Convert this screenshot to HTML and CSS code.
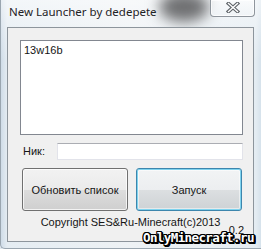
FILE: index.html
```html
<!DOCTYPE html>
<html>
<head>
<meta charset="utf-8">
<link rel="stylesheet" href="styles.css">
</head>
<body>
<div class="window">
  <div class="blob"></div>
  <div class="titlebar">
    <div class="title">New Launcher by dedepete</div>
    <div class="close">
      <svg width="14" height="11" viewBox="0 0 14 11">
        <path d="M2.5 1.5 L11.5 9.5 M11.5 1.5 L2.5 9.5" stroke="#5f6469" stroke-width="3.6" stroke-linecap="square" fill="none"/>
        <path d="M2.5 1.5 L11.5 9.5 M11.5 1.5 L2.5 9.5" stroke="#ffffff" stroke-width="1.4" stroke-linecap="square" fill="none"/>
      </svg>
    </div>
  </div>
  <div class="client">
    <div class="listbox"><div class="item">13w16b</div></div>
    <div class="nickrow">
      <span class="label">Ник:</span>
      <div class="field"></div>
    </div>
    <div class="buttons">
      <div class="btn">Обновить список</div>
      <div class="btn default">Запуск</div>
    </div>
    <div class="copyright">Copyright SES&amp;Ru-Minecraft(c)2013</div>
    <div class="version">0.2</div>
  </div>
  <div class="watermark">OnlyMinecraft.ru</div>
</div>
</body>
</html>
```
FILE: styles.css
```css
html, body {
  margin: 0;
  padding: 0;
}
body {
  width: 261px;
  height: 249px;
  overflow: hidden;
  background: #dfe8ef;
}
.window {
  position: relative;
  width: 261px;
  height: 249px;
  box-sizing: border-box;
  background:
    linear-gradient(180deg, rgba(255,255,255,0.55) 0px, rgba(255,255,255,0.25) 30px, rgba(255,255,255,0) 60px),
    linear-gradient(90deg, #cfdce8 0px, #e4ecf2 6px, #eef2f5 130px, #e4ecf2 255px, #d3e0ea 261px);
  border-left: 1px solid #9aa6b0;
  border-bottom: 1px solid #9aa6b0;
  border-bottom-left-radius: 5px;
}
.blob {
  position: absolute;
  left: 158px;
  top: -8px;
  width: 50px;
  height: 30px;
  border-radius: 50%;
  background: #6f7072;
  filter: blur(7px);
}
.titlebar {
  position: relative;
  display: flex;
  height: 27px;
}
.title {
  font-family: "Noto Sans", "Open Sans", sans-serif;
  font-size: 11.5px;
  color: #1f2326;
  padding: 4px 0 0 8px;
  line-height: 16px;
  text-shadow: 0 0 6px rgba(255,255,255,0.9);
}
.close {
  margin-left: auto;
  margin-right: 6px;
  width: 45px;
  height: 17px;
  box-sizing: border-box;
  border: 1px solid #8f969d;
  border-top: none;
  border-radius: 0 0 4px 4px;
  background: linear-gradient(180deg, rgba(255,255,255,0.5), rgba(240,244,247,0.9));
  box-shadow: inset 0 0 0 1px rgba(255,255,255,0.7);
  display: flex;
  align-items: center;
  justify-content: center;
}
.close svg {
  display: block;
  margin-top: -1px;
}
.client {
  position: relative;
  margin-left: 6px;
  width: 247px;
  height: 215px;
  box-sizing: border-box;
  border: 1px solid #8d959c;
  background: #f0f0f0;
  font-family: "Liberation Sans", Arial, sans-serif;
  font-size: 11px;
  color: #151515;
  padding-top: 12px;
}
.listbox {
  margin-left: 12px;
  width: 223px;
  height: 95px;
  box-sizing: border-box;
  border: 1px solid #828790;
  background: #ffffff;
  padding: 3px 0 0 3px;
}
.item {
  line-height: 13px;
}
.nickrow {
  display: flex;
  align-items: center;
  margin-top: 8px;
  height: 17px;
}
.label {
  margin-left: 15px;
  width: 34px;
  line-height: 13px;
}
.field {
  width: 186px;
  height: 17px;
  box-sizing: border-box;
  border: 1px solid #e2e3ea;
  border-top-color: #abadb3;
  background: #ffffff;
}
.buttons {
  display: flex;
  gap: 8px;
  margin-top: 8px;
  margin-left: 14px;
}
.btn {
  width: 106px;
  height: 43px;
  box-sizing: border-box;
  border: 1px solid #707070;
  border-radius: 3px;
  background: linear-gradient(180deg, #f2f2f2 0%, #ebebeb 50%, #dddddd 51%, #cfcfcf 100%);
  box-shadow: inset 0 0 0 1px rgba(255,255,255,0.75);
  display: flex;
  align-items: center;
  justify-content: center;
  font-size: 11px;
  color: #151515;
}
.btn.default {
  border-color: #3d86ad;
  box-shadow: inset 0 0 0 1px #7fd3ee, inset 0 0 0 2px rgba(255,255,255,0.5);
  background: linear-gradient(180deg, #f2f4f5 0%, #eceef0 50%, #dcdfe1 51%, #ced2d5 100%);
}
.copyright {
  margin-top: 5px;
  text-align: center;
  line-height: 13px;
  font-size: 11px;
}
.version {
  position: absolute;
  right: 9px;
  bottom: 5px;
  line-height: 12px;
}
.watermark {
  position: absolute;
  left: 142px;
  top: 231px;
  font-family: "DejaVu Sans Mono", monospace;
  font-weight: bold;
  font-size: 12.5px;
  letter-spacing: -0.6px;
  line-height: 14px;
  color: #ffffff;
  text-shadow:
    1px 0 0 #000, -1px 0 0 #000, 0 1px 0 #000, 0 -1px 0 #000,
    1px 1px 0 #000, -1px -1px 0 #000, 1px -1px 0 #000, -1px 1px 0 #000,
    2px 0 0 #000, 0 2px 0 #000, 2px 2px 0 #000, 2px 1px 0 #000, 1px 2px 0 #000;
}
```
